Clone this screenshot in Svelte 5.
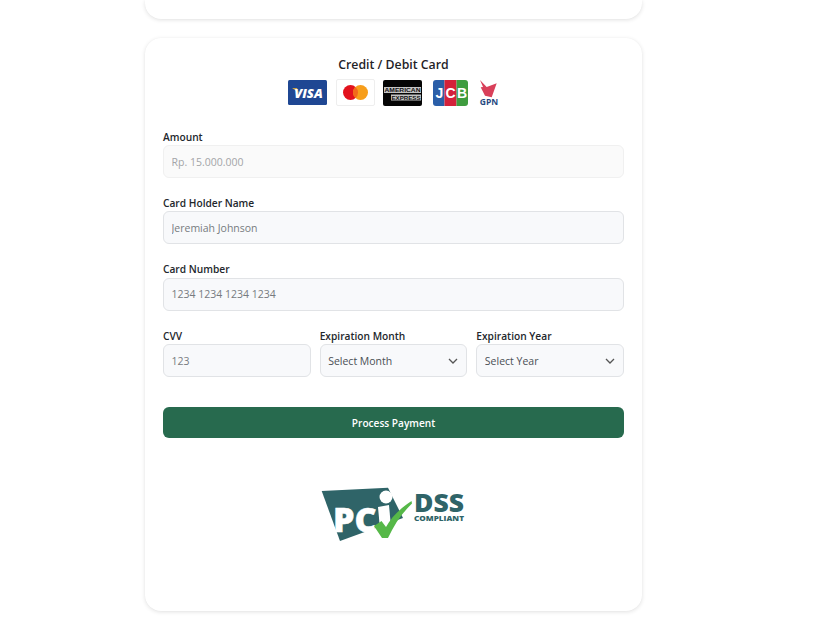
<script>
  const months = ['Select Month'];
  const years = ['Select Year'];
</script>

<div class="page">
  <div class="column">
    <div class="card top"></div>
    <form class="card main">
      <h2>Credit / Debit Card</h2>
      <div class="logos">
        <svg class="l-visa" width="39" height="25" viewBox="0 0 39 25">
          <rect width="39" height="25" rx="1.5" fill="#1f4793"/>
          <path d="M4 8h5l2 5z" fill="#c9a24a"/>
          <text x="20.5" y="17.500" class="visa">VISA</text>
        </svg>
        <svg class="l-mc" width="39" height="27" viewBox="0 0 39 27">
          <rect x=".5" y=".5" width="38" height="26" rx="1.5" fill="#fff" stroke="#eeeeee"/>
          <circle cx="14.500" cy="13.500" r="7.500" fill="#e2121d"/>
          <circle cx="24.500" cy="13.500" r="7.500" fill="#f79e1b"/>
          <path d="M19.500 7.900a7.500 7.500 0 0 1 0 11.200a7.500 7.500 0 0 1 0-11.200z" fill="#f26a1b"/>
        </svg>
        <svg class="l-amex" width="39" height="26" viewBox="0 0 39 26">
          <rect width="39" height="26" rx="2" fill="#050505"/>
          <rect x="1" y="7" width="37" height="6" fill="#c4c4c4"/>
          <rect x="8" y="14.500" width="30" height="6" fill="#c4c4c4"/>
          <text x="1.500" y="12.300" textLength="36" lengthAdjust="spacingAndGlyphs" class="amex">AMERICAN</text>
          <text x="8.500" y="19.800" textLength="29" lengthAdjust="spacingAndGlyphs" class="amex">EXPRESS</text>
        </svg>
        <svg class="l-jcb" width="35" height="26" viewBox="0 0 35 26">
          <path d="M3 0h8.500v26H3a3 3 0 0 1-3-3V3a3 3 0 0 1 3-3z" fill="#2a5ea8"/>
          <rect x="11.500" width="12" height="26" fill="#d3213a"/>
          <path d="M23.500 0H32a3 3 0 0 1 3 3v20a3 3 0 0 1-3 3h-8.500z" fill="#3f9c3f"/>
          <text x="6.500" y="18" class="jcb">J</text>
          <text x="17.500" y="18" class="jcb">C</text>
          <text x="29" y="18" class="jcb">B</text>
        </svg>
        <svg class="l-gpn" width="20" height="27" viewBox="0 0 20 27">
          <path d="M1 1L7.700 8 17.700 4.300 12.700 18.300 6 16.700 1.700 8.300 4 8z" fill="#d9405a"/>
          <text x="10" y="25.500" class="gpntext">GPN</text>
        </svg>
      </div>

      <div class="field">
        <label for="amount">Amount</label>
        <input id="amount" class="disabled" placeholder="Rp. 15.000.000" readonly />
      </div>
      <div class="field">
        <label for="holder">Card Holder Name</label>
        <input id="holder" placeholder="Jeremiah Johnson" />
      </div>
      <div class="field">
        <label for="number">Card Number</label>
        <input id="number" placeholder="1234 1234 1234 1234" />
      </div>

      <div class="row">
        <div class="field">
          <label for="cvv">CVV</label>
          <input id="cvv" placeholder="123" />
        </div>
        <div class="field">
          <label for="month">Expiration Month</label>
          <select id="month">
            {#each months as m}<option>{m}</option>{/each}
          </select>
        </div>
        <div class="field">
          <label for="year">Expiration Year</label>
          <select id="year">
            {#each years as y}<option>{y}</option>{/each}
          </select>
        </div>
      </div>

      <button type="button">Process Payment</button>

      <div class="pci">
        <svg width="146" height="60" viewBox="0 0 146 60">
          <path d="M.7 6L67 2.700 82 33 19 56z" fill="#2f6468"/>
          <text x="12" y="47" class="pcitext">PC</text>
          <path d="M57 22L68 20 70 42 59 44z" fill="#fff"/>
          <circle cx="65" cy="12" r="6.500" fill="#fff"/>
          <path d="M53 41L60.500 36 65 42C70 33 78 24 90.500 16L91 18.500C81 28 73 40 67 53H61z" fill="#56b848"/>
          <text x="93" y="27" textLength="50" lengthAdjust="spacingAndGlyphs" class="dss">DSS</text>
          <text x="93" y="35.800" textLength="50" lengthAdjust="spacingAndGlyphs" class="compliant">COMPLIANT</text>
        </svg>
      </div>
    </form>
  </div>
</div>

<style>
  :global(body) {
    margin: 0;
    background: #fff;
    font-family: "Open Sans", "Noto Sans", sans-serif;
  }
  .page {
    height: 624px;
    overflow: hidden;
    display: flex;
    justify-content: center;
  }
  .column {
    width: 497px;
    margin-right: 41px;
    display: flex;
    flex-direction: column;
    gap: 19px;
  }
  .card {
    background: #fff;
    border-radius: 16px;
    box-shadow: 0 1px 4px rgba(0, 0, 0, 0.12), 0 0 1px rgba(0, 0, 0, 0.04);
    box-sizing: border-box;
  }
  .top {
    height: 19px;
    border-radius: 0 0 16px 16px;
  }
  .main {
    height: 573px;
    padding: 18px 18px 18px 18px;
  }
  h2 {
    margin: 0;
    text-align: center;
    font-size: 12.300px;
    line-height: 17px;
    font-weight: 600;
    color: #1f2328;
  }
  .logos {
    display: flex;
    justify-content: center;
    align-items: center;
    height: 27px;
    margin-top: 6px;
    margin-bottom: 23.500px;
    margin-left: -1px;
  }
  .logos svg { display: block; }
  .l-mc { margin-left: 9px; }
  .l-amex { margin-left: 8px; }
  .l-jcb { margin-left: 11px; }
  .l-gpn { margin-left: 11px; }
  .visa {
    font: italic 800 13px "Open Sans", sans-serif;
    fill: #fff;
    text-anchor: middle;
  }
  .amex {
    font: 700 6px "Liberation Sans", sans-serif;
    fill: #111;
  }
  .jcb {
    font: 700 14px "Liberation Sans", sans-serif;
    fill: #fff;
    text-anchor: middle;
  }
  .gpntext {
    font: 700 8.500px "Open Sans", sans-serif;
    fill: #26497f;
    text-anchor: middle;
  }
  .field {
    display: flex;
    flex-direction: column;
    min-width: 0;
    margin-bottom: 17.900px;
  }
  label {
    font-size: 10.200px;
    line-height: 14px;
    font-weight: 600;
    color: #23272c;
    margin-bottom: 1.500px;
  }
  input, select {
    box-sizing: border-box;
    width: 100%;
    height: 33px;
    padding: 0 7.500px;
    border: 1px solid #e1e3e6;
    border-radius: 6px;
    background-color: #f8f9fb;
    font-family: inherit;
    font-size: 10.500px;
    color: #4a4f55;
    outline: none;
  }
  input::placeholder { color: #777b80; opacity: 1; }
  input.disabled {
    background: #fafafa;
    border-color: #f0f0f0;
  }
  input.disabled::placeholder { color: #a3a5a8; }
  select {
    appearance: none;
    background-image: url("data:image/svg+xml,%3Csvg xmlns='http://www.w3.org/2000/svg' width='10' height='6' viewBox='0 0 10 6'%3E%3Cpath d='M1 1l4 4 4-4' fill='none' stroke='%23555' stroke-width='1.300'/%3E%3C/svg%3E");
    background-repeat: no-repeat;
    background-position: right 8px center;
  }
  .row {
    display: grid;
    grid-template-columns: repeat(3, 1fr);
    gap: 9px;
  }
  .row .field { margin-bottom: 0; }
  button {
    display: block;
    width: 100%;
    height: 31px;
    margin-top: 30px;
    border: 0;
    border-radius: 6px;
    background: #276a4e;
    color: #fff;
    font-family: inherit;
    font-size: 10.100px;
    font-weight: 600;
  }
  .pci {
    display: flex;
    justify-content: center;
    margin-top: 46.800px;
    margin-left: 0;
  }
  .pcitext {
    font: 800 34px "Open Sans", sans-serif;
    fill: #fff;
    stroke: #fff;
    stroke-width: .5px;
  }
  .dss {
    font: 800 25px "Open Sans", sans-serif;
    fill: #2f6468;
  }
  .compliant {
    font: 800 6.500px "Open Sans", sans-serif;
    fill: #2f6468;
  }
</style>
